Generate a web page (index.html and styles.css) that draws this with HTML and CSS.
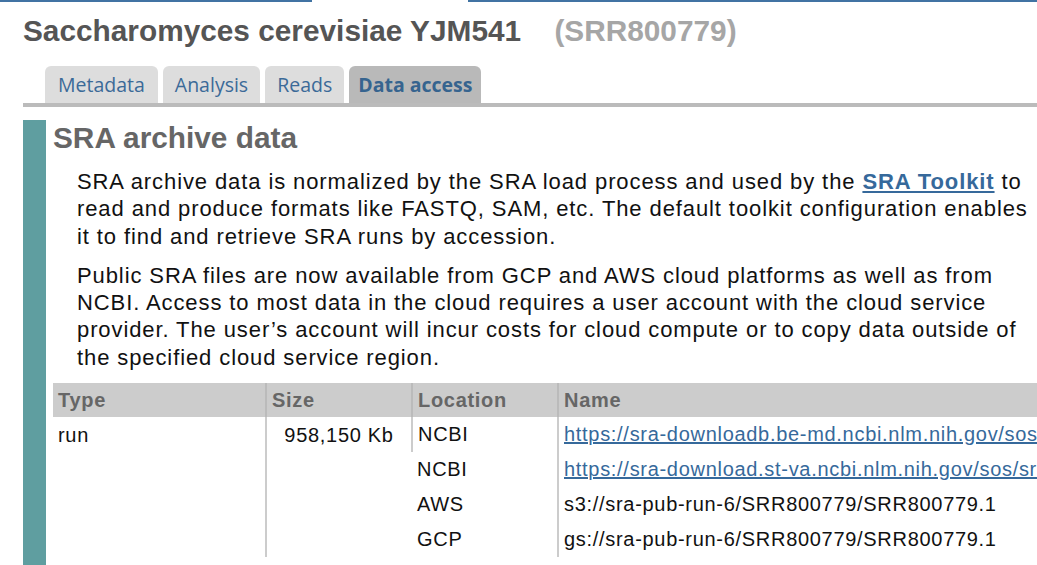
FILE: index.html
```html
<!DOCTYPE html>
<html>
<head>
<meta charset="utf-8">
<link rel="stylesheet" href="styles.css">
</head>
<body>
<div class="topline"><span class="seg seg-left"></span><span class="seg seg-right"></span></div>
<h1 class="title">Saccharomyces cerevisiae YJM541 <span class="acc">(SRR800779)</span></h1>
<ul class="tabs">
  <li class="tab">Metadata</li>
  <li class="tab">Analysis</li>
  <li class="tab">Reads</li>
  <li class="tab active">Data access</li>
</ul>
<section class="panel">
  <h2 class="panel-title">SRA archive data</h2>
  <p class="text">SRA archive data is normalized by the SRA load process and used by the <a class="strong-link" href="#">SRA Toolkit</a> to read and produce formats like FASTQ, SAM, etc. The default toolkit configuration enables it to find and retrieve SRA runs by accession.</p>
  <p class="text">Public SRA files are now available from GCP and AWS cloud platforms as well as from NCBI. Access to most data in the cloud requires a user account with the cloud service provider. The user’s account will incur costs for cloud compute or to copy data outside of the specified cloud service region.</p>
  <table class="files">
    <thead>
      <tr><th class="c-type">Type</th><th class="c-size">Size</th><th class="c-loc">Location</th><th class="c-name">Name</th></tr>
    </thead>
    <tbody>
      <tr><td rowspan="4">run</td><td rowspan="4" class="size">958,150 Kb</td><td>NCBI</td><td><a href="#">https://sra-downloadb.be-md.ncbi.nlm.nih.gov/sos1/sra-pub-run-2/SRR800779/SRR800779.1</a></td></tr>
      <tr><td>NCBI</td><td><a href="#">https://sra-download.st-va.ncbi.nlm.nih.gov/sos/sra-pub-run-6/SRR800779/SRR800779.1</a></td></tr>
      <tr><td>AWS</td><td>s3://sra-pub-run-6/SRR800779/SRR800779.1</td></tr>
      <tr><td>GCP</td><td>gs://sra-pub-run-6/SRR800779/SRR800779.1</td></tr>
    </tbody>
  </table>
</section>
</body>
</html>
```
FILE: styles.css
```css
html, body {
  margin: 0;
  padding: 0;
  background: #fff;
  overflow: hidden;
  font-family: "Liberation Sans", Arial, sans-serif;
}
body {
  width: 1037px;
  height: 565px;
}
.topline {
  display: flex;
  height: 2px;
}
.seg {
  display: block;
  height: 2px;
  background: #4173a3;
}
.seg-left { width: 312px; }
.seg-right { margin-left: 156px; flex: 1; }

.title {
  margin: 12px 0 0 23px;
  font-size: 29.8px;
  font-weight: bold;
  color: #555;
  line-height: 34px;
  white-space: nowrap;
}
.title .acc {
  color: #a6a6a6;
  margin-left: 25px;
}

.tabs {
  list-style: none;
  margin: 18px 0 0 23px;
  padding: 0 0 0 22px;
  display: flex;
  gap: 5px;
  border-bottom: 4px solid #bbb;
}
.tab {
  font-family: "Open Sans", sans-serif;
  font-size: 19.5px;
  color: #3b6a98;
  background: #ddd;
  border-radius: 6px 6px 0 0;
  height: 37px;
  line-height: 37px;
  padding: 0 12px;
}
.tab:first-child {
  padding: 0 13px;
}
.tab.active {
  background: #b9b9b9;
  font-weight: bold;
  color: #36648f;
  padding: 0 9px;
}

.panel {
  margin: 13px 0 0 23px;
  border-left: 23px solid #5f9ea0;
  padding: 0 0 0 7px;
  height: 460px;
  overflow: hidden;
}
.panel-title {
  margin: 0;
  padding-top: 2px;
  font-size: 29.8px;
  line-height: 32px;
  font-weight: bold;
  color: #666;
}
.text {
  margin: 14px 0 0 24px;
  font-size: 22px;
  letter-spacing: 0.9px;
  line-height: 27.3px;
  color: #111;
}
.text + .text {
  margin-top: 12px;
}
.strong-link {
  color: #36699b;
  font-weight: bold;
}
.files {
  margin-top: 12px;
  border-collapse: collapse;
  table-layout: fixed;
  width: 1100px;
  font-size: 20px;
  letter-spacing: 0.7px;
  white-space: nowrap;
}
.files th {
  background: #ccc;
  color: #666;
  text-align: left;
  font-weight: bold;
  height: 34px;
  padding: 0 5px;
  border-left: 2px solid #bbb;
}
.files th:first-child, .files td:first-child { border-left: none; }
.c-type { width: 202px; }
.c-size { width: 134px; }
.c-loc { width: 134px; }
.c-name { width: 595px; }
.files td {
  height: 35px;
  padding: 0 5px;
  border-left: 2px solid #ccc;
  vertical-align: middle;
  color: #111;
  overflow: hidden;
}
.files td[rowspan] { vertical-align: top; padding-top: 7px; }
.files td.size { text-align: center; }
.files a {
  color: #36699b;
}
```
